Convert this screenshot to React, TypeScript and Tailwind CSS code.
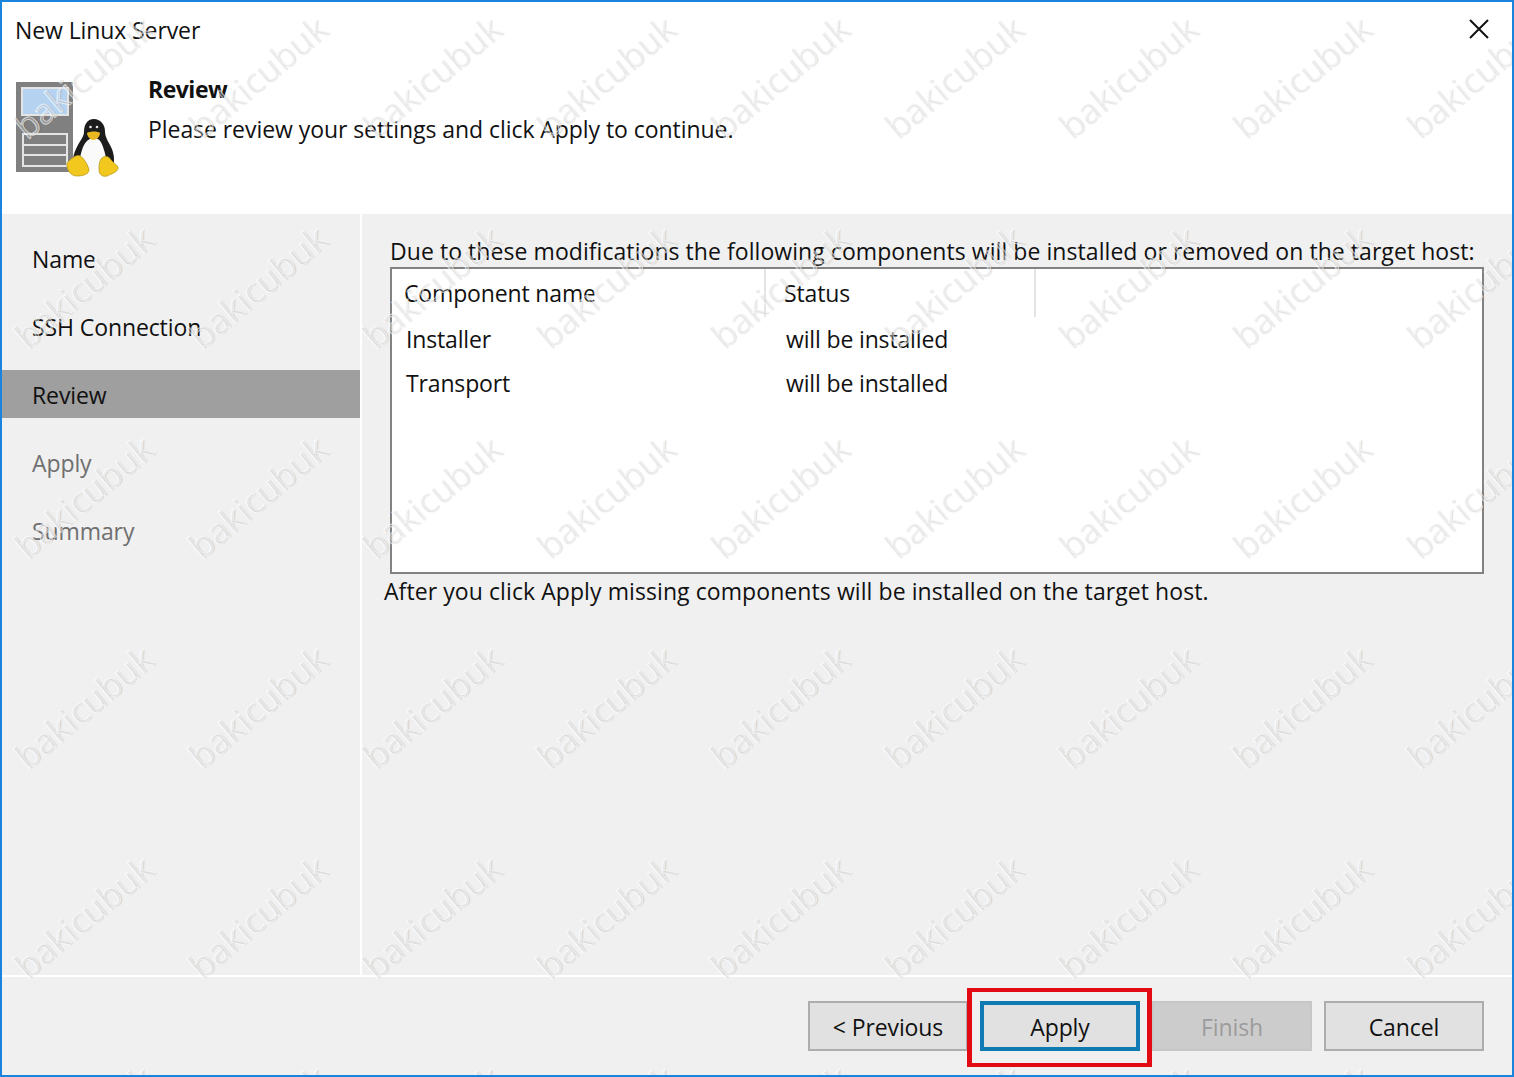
import React from 'react';

const FONT = "font-['Open_Sans','Noto_Sans',sans-serif]";

const steps = [
    { label: 'Name', state: 'done' },
    { label: 'SSH Connection', state: 'done' },
    { label: 'Review', state: 'active' },
    { label: 'Apply', state: 'todo' },
    { label: 'Summary', state: 'todo' },
];

const ServerIcon = () => (
    <svg width="104" height="98" viewBox="0 0 104 98" className="shrink-0">
        <rect x="1" y="2" width="57" height="90" fill="#808080" />
        <rect x="7" y="8" width="46" height="27" fill="#b5d3f0" stroke="#e4e4e4" strokeWidth="2" />
        <rect x="8" y="54" width="44" height="32" fill="#808080" stroke="#e4e4e4" strokeWidth="2" />
        <path d="M8 65h44M8 75h44" stroke="#e4e4e4" strokeWidth="2" />
        <path d="M79 39C72 39 69 45 69 52C69 57 64 62 61 69C58 75 57 82 59 88L98 88C100 80 99 73 96 67C93 61 90 57 90 51C90 44 85 39 79 39Z" fill="#1c1c1c" />
        <path d="M79 58C73 58 69 63 67 70C65 76 64 82 66 89L90 89C92 82 91 76 89 70C87 63 85 58 79 58Z" fill="#fafafa" />
        <path d="M72 53c3-2 11-2 13 0 0 3-3 7-6.500 7S72 56 72 53z" fill="#e8b820" />
        <circle cx="75.500" cy="47" r="1.300" fill="#e8e8e8" />
        <circle cx="82" cy="47" r="1.300" fill="#e8e8e8" />
        <path d="M52 83C56 79 61 74 65 76C69 78 73 85 74 90C74 94 68 96 62 96C56 96 51 90 52 83Z" fill="#f2c81e" stroke="#b89a20" strokeWidth="0.800" />
        <path d="M86 79C89 75 94 76 96 80C98 83 103 85 103 88C103 92 96 94 92 96C88 97 84 95 84 90C84 86 84 82 86 79Z" fill="#f2c81e" stroke="#b89a20" strokeWidth="0.800" />
    </svg>
);

const Watermark = () => (
    <div className="pointer-events-none absolute inset-0 overflow-hidden">
        <div className="ml-[-6px] mt-[-31px] grid w-[1740px] grid-cols-[repeat(10,174px)] auto-rows-[210px]">
            {Array.from({ length: 60 }).map((_, i) => (
                <div key={i} className="flex items-center justify-center">
                    <span className="rotate-[-40deg] whitespace-nowrap font-['Open_Sans',sans-serif] text-[35px] leading-none text-white/30 [-webkit-text-stroke:1px_rgba(255,255,255,0.6)] [text-shadow:1px_1px_1px_rgba(0,0,0,0.14)]">
                        bakicubuk
                    </span>
                </div>
            ))}
        </div>
    </div>
);

const WizardButton = ({ label, variant }: { label: string; variant?: 'focus' | 'disabled' }) => {
    let cls = 'border-2 border-[#adadad] bg-[#e1e1e1] text-[#111]';
    if (variant === 'focus') cls = 'border-[4px] border-[#0f7bb2] bg-[#e1e1e1] text-[#111]';
    if (variant === 'disabled') cls = 'border-2 border-[#c6c6c6] bg-[#cccccc] text-[#9c9c9c]';
    return <div className={`flex h-[50px] w-[160px] items-center justify-center pt-[2px] text-[23px] tracking-[-0.1px] ${cls}`}>{label}</div>;
};

const App: React.FC = () => {
    return (
        <div className={`relative flex h-[1077px] w-[1514px] flex-col overflow-hidden border-2 border-[#1a84dc] bg-[#f0f0f0] text-[#111] ${FONT}`}>
            {/* header */}
            <div className="h-[212px] shrink-0 bg-white pl-[13px] pr-[23px]">
                <div className="flex h-[56px] items-center justify-between">
                    <span className="text-[23px] tracking-[-0.1px]">New Linux Server</span>
                    <svg width="20" height="20" viewBox="0 0 20 20" className="mb-[2px]">
                        <path d="M1 1l18 18M19 1L1 19" stroke="#111" strokeWidth="2" fill="none" />
                    </svg>
                </div>
                <div className="mt-[22px] flex">
                    <ServerIcon />
                    <div className="ml-[29px] mt-[-9px]">
                        <div className="h-[36px] text-[23px] font-bold leading-[36px] tracking-[-0.5px]">Review</div>
                        <div className="mt-[4px] text-[23px] leading-[36px] tracking-[-0.06px]">Please review your settings and click Apply to continue.</div>
                    </div>
                </div>
            </div>

            <div className="flex min-h-0 flex-1">
                {/* steps */}
                <div className="flex w-[358px] shrink-0 flex-col gap-[20px] pt-[20px]">
                    {steps.map((step) => (
                        <div
                            key={step.label}
                            className={`flex h-[48px] items-center pl-[30px] pt-[3px] text-[23px] tracking-[-0.1px] ${step.state === 'active' ? 'bg-[#9f9f9f]' : ''} ${step.state === 'todo' ? 'text-[#6f6f6f]' : ''}`}
                        >
                            {step.label}
                        </div>
                    ))}
                </div>
                <div className="w-[2px] shrink-0 bg-white" />

                {/* content */}
                <div className="min-w-0 flex-1 pl-[22px] pr-[28px] pt-[21px]">
                    <div className="ml-[6px] h-[32px] whitespace-nowrap text-[23px] leading-[32px] tracking-[0.06px]">
                        Due to these modifications the following components will be installed or removed on the target host:
                    </div>
                    <div className="ml-[6px] h-[307px] border-2 border-[#828282] bg-white">
                        <div className="flex h-[48px] text-[23px] tracking-[-0.15px]">
                            <div className="flex w-[374px] items-center border-r-2 border-[#e4e4e4] pl-[12px]">Component name</div>
                            <div className="flex w-[270px] items-center border-r-2 border-[#e4e4e4] pl-[18px]">Status</div>
                        </div>
                        {[['Installer', 'will be installed'], ['Transport', 'will be installed']].map(([name, status]) => (
                            <div key={name} className="flex h-[44px] items-center text-[23px] tracking-[-0.15px]">
                                <div className="w-[394px] pl-[14px]">{name}</div>
                                <div>{status}</div>
                            </div>
                        ))}
                    </div>
                    <div className="mt-[-1px] h-[36px] whitespace-nowrap text-[23px] leading-[36px] tracking-[0.08px]">
                        After you click Apply missing components will be installed on the target host.
                    </div>
                </div>
            </div>

            {/* footer */}
            <div className="flex h-[100px] shrink-0 justify-end gap-[12px] border-t-2 border-white pr-[28px] pt-[24px]">
                <WizardButton label="< Previous" />
                <WizardButton label="Apply" variant="focus" />
                <WizardButton label="Finish" variant="disabled" />
                <WizardButton label="Cancel" />
            </div>

            {/* annotation round the Apply button */}
            <div className="absolute left-[965px] top-[986px] h-[79px] w-[185px] border-x-[5px] border-y-[4px] border-[#e30b13]" />
            <Watermark />
        </div>
    );
};

export default App;
